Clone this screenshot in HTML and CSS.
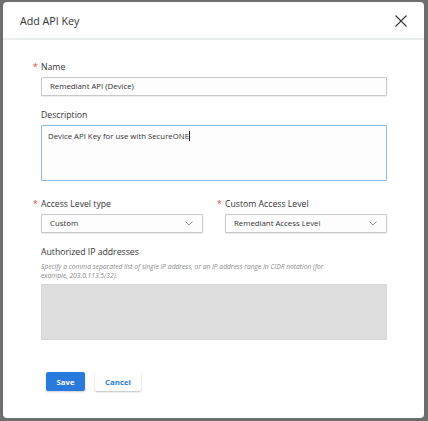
FILE: index.html
```html
<!DOCTYPE html>
<html>
<head>
<meta charset="utf-8">
<link rel="stylesheet" href="styles.css">
</head>
<body>
<div class="modal">
  <div class="modal-header">
    <div class="modal-title">Add API Key</div>
    <svg class="close" width="12" height="12" viewBox="0 0 12 12"><path d="M0.5 0.5L11.5 11.5M11.5 0.5L0.5 11.5" stroke="#333" stroke-width="1.1" fill="none"/></svg>
  </div>
  <div class="modal-body">
    <div class="field">
      <div class="label"><span class="req">*</span>Name</div>
      <div class="input">Remediant API (Device)</div>
    </div>
    <div class="field">
      <div class="label">Description</div>
      <div class="textarea focused">Device API Key for use with SecureONE<span class="caret"></span></div>
    </div>
    <div class="row">
      <div class="field col">
        <div class="label"><span class="req">*</span>Access Level type</div>
        <div class="select"><span>Custom</span><svg width="8" height="5" viewBox="0 0 8 5"><path d="M0.5 0.5L4 4L7.5 0.5" stroke="#8a8a8a" stroke-width="0.9" fill="none"/></svg></div>
      </div>
      <div class="field col">
        <div class="label"><span class="req">*</span>Custom Access Level</div>
        <div class="select"><span>Remediant Access Level</span><svg width="8" height="5" viewBox="0 0 8 5"><path d="M0.5 0.5L4 4L7.5 0.5" stroke="#8a8a8a" stroke-width="0.9" fill="none"/></svg></div>
      </div>
    </div>
    <div class="field ip">
      <div class="label">Authorized IP addresses</div>
      <div class="help">Specify a comma separated list of single IP address, or an IP address range in CIDR notation (for example, 203.0.113.5/32).</div>
      <div class="textarea disabled"></div>
    </div>
    <div class="actions">
      <button class="btn primary">Save</button>
      <button class="btn secondary">Cancel</button>
    </div>
  </div>
</div>
</body>
</html>
```
FILE: styles.css
```css
* { box-sizing: border-box; }
html, body { margin: 0; padding: 0; }
body {
  background: #6e6e6e;
  font-family: "Open Sans", "Liberation Sans", sans-serif;
  color: #333;
  width: 428px;
  height: 421px;
  overflow: hidden;
}
.modal {
  margin: 2px 0 0 3px;
  width: 421px;
  height: 416px;
  background: #fff;
  border-radius: 4px;
}
.modal-header {
  height: 38px;
  border-bottom: 2px solid #e9eded;
  display: flex;
  align-items: center;
  justify-content: space-between;
  padding: 0 17px 0 17px;
}
.modal-title {
  font-size: 10.7px;
  color: #333;
  margin-top: 1px;
}
.close { margin-top: 1px; }
.modal-body {
  padding: 21px 37px 0 38px;
}
.field { display: flex; flex-direction: column; }
.label {
  font-size: 8.7px;
  line-height: 12px;
  height: 12px;
  color: #333;
  margin-bottom: 4px;
  position: relative;
}
.req {
  color: #e03a3a;
  position: absolute;
  left: -8px;
  top: 0;
  font-size: 8.7px;
}
.input, .select {
  height: 19px;
  border: 1px solid #c9c9c9;
  border-radius: 1px;
  background: #fdfdfd;
  font-size: 7.8px;
  line-height: 17px;
  padding: 0 8px;
  color: #333;
  box-shadow: 0 1px 1px rgba(0,0,0,0.08);
}
.field + .field { margin-top: 13px; }
.textarea {
  height: 56px;
  border: 1px solid #c9c9c9;
  border-radius: 1px;
  font-size: 7.8px;
  line-height: 10px;
  padding: 5px 6px;
  color: #333;
}
.textarea.focused {
  border-color: #8db6ec;
  background: #fdfdfd;
}
.caret {
  display: inline-block;
  width: 0;
  height: 10px;
  border-left: 1px solid #222;
  vertical-align: -2px;
}
.row {
  display: flex;
  gap: 22px;
  margin-top: 17px;
}
.row .field { margin-top: 0; }
.col { flex: 1; }
.row .label { margin-bottom: 4px; }
.select {
  display: flex;
  align-items: center;
  justify-content: space-between;
  padding-right: 9px;
}
.ip { margin-top: 13px; }
.help {
  font-size: 6.7px;
  font-style: italic;
  color: #8a8a8a;
  line-height: 9px;
  margin-top: 0;
  margin-bottom: 4px;
  max-width: 300px;
}
.textarea.disabled {
  background: #dedede;
  border-color: #d6d6d6;
  height: 56px;
}
.actions {
  display: flex;
  gap: 10px;
  margin-top: 32px;
  padding-left: 5px;
}
.btn {
  height: 19px;
  border: none;
  border-radius: 2px;
  font-family: "Open Sans", "Liberation Sans", sans-serif;
  font-size: 7.8px;
  font-weight: 700;
  padding: 0;
  cursor: pointer;
}
.primary {
  width: 39px;
  background: #2a7ade;
  color: #fff;
  box-shadow: 0 1px 2px rgba(0,0,0,0.2);
}
.secondary {
  width: 46px;
  background: #fff;
  color: #2a7ade;
  box-shadow: 0 1px 2px rgba(0,0,0,0.25);
}
```
